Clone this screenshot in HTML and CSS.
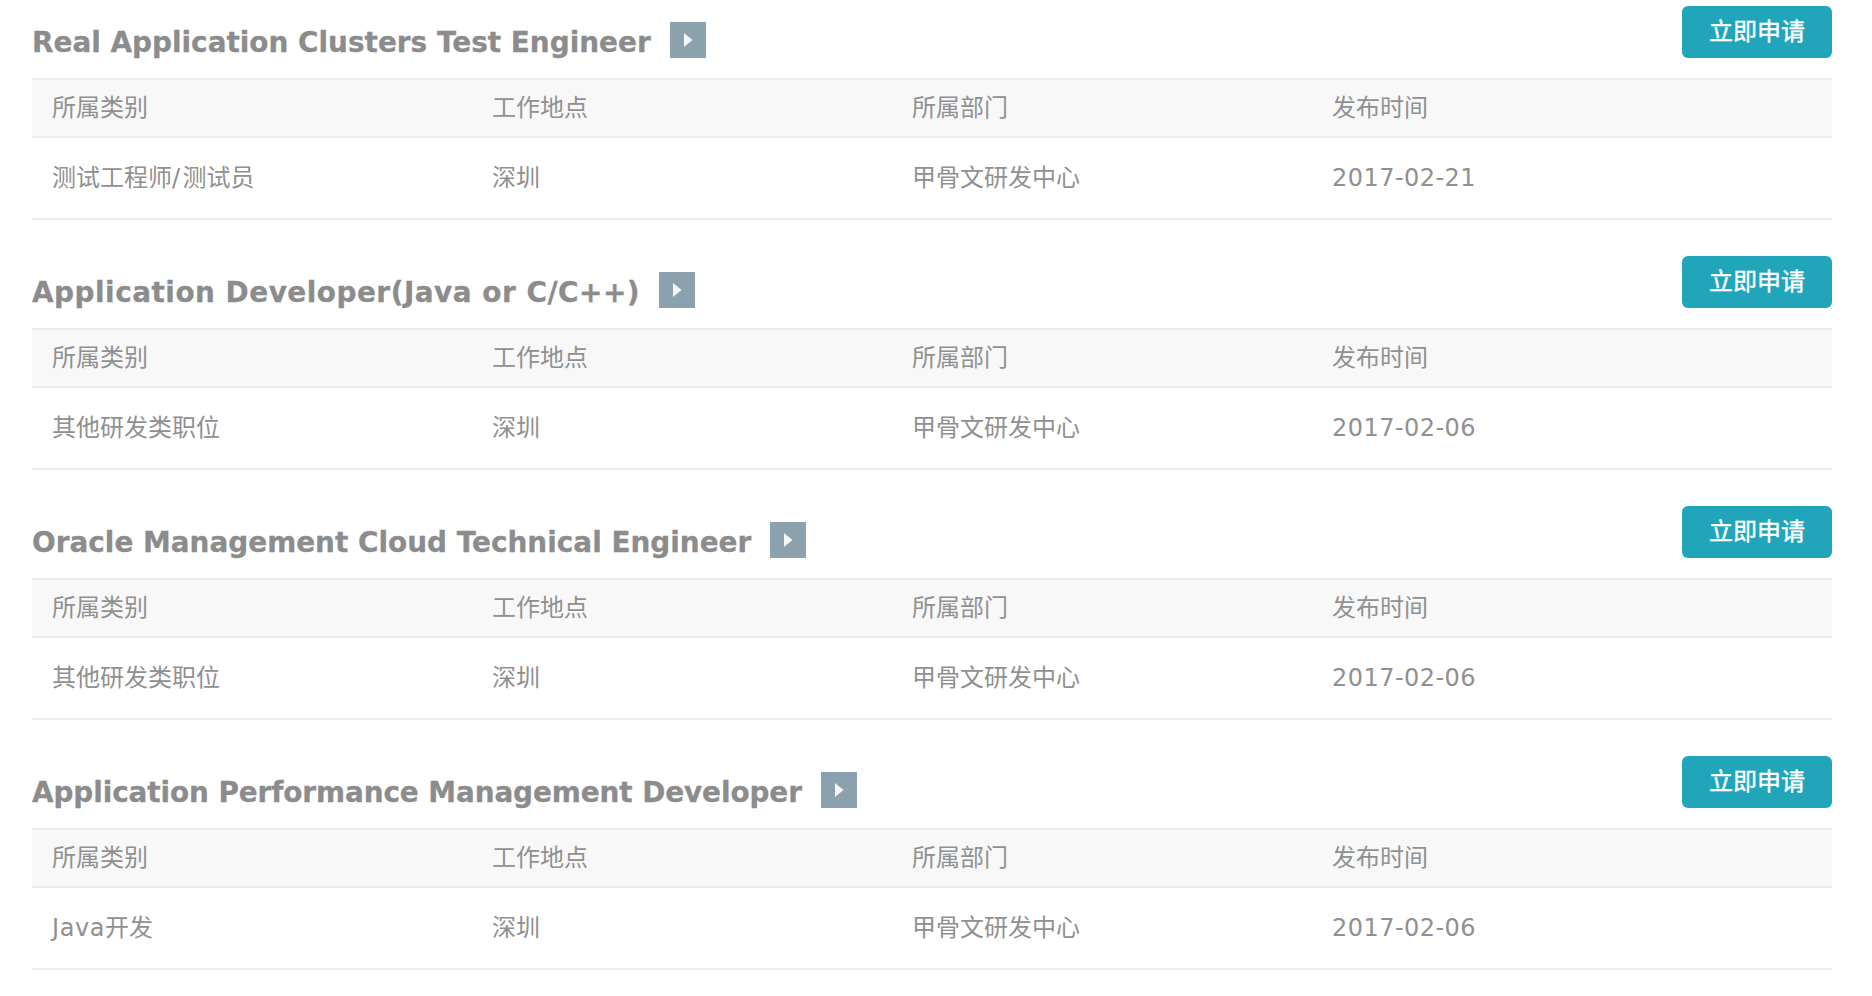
FILE: index.html
```html
<!DOCTYPE html>
<html lang="zh-CN">
<head>
<meta charset="utf-8">
<title>职位列表</title>
<link rel="stylesheet" href="styles.css">
</head>
<body>
<main class="list">
  <section class="job">
    <div class="job-head">
      <h2 class="job-title">Real Application Clusters Test Engineer</h2>
      <span class="arrow"><svg viewBox="0 0 36 36" width="36" height="36"><path d="M14 11l8.500 7-8.500 7z" fill="#f4f7f8"/></svg></span>
      <a class="apply">立即申请</a>
    </div>
    <div class="row row-head"><span>所属类别</span><span>工作地点</span><span>所属部门</span><span>发布时间</span></div>
    <div class="row row-body"><span>测试工程师<i class="slash">/</i>测试员</span><span>深圳</span><span>甲骨文研发中心</span><span class="date">2017-02-21</span></div>
  </section>
  <section class="job">
    <div class="job-head">
      <h2 class="job-title job-title-wide">Application Developer(Java or C/C++)</h2>
      <span class="arrow"><svg viewBox="0 0 36 36" width="36" height="36"><path d="M14 11l8.500 7-8.500 7z" fill="#f4f7f8"/></svg></span>
      <a class="apply">立即申请</a>
    </div>
    <div class="row row-head"><span>所属类别</span><span>工作地点</span><span>所属部门</span><span>发布时间</span></div>
    <div class="row row-body"><span>其他研发类职位</span><span>深圳</span><span>甲骨文研发中心</span><span class="date">2017-02-06</span></div>
  </section>
  <section class="job">
    <div class="job-head">
      <h2 class="job-title">Oracle Management Cloud Technical Engineer</h2>
      <span class="arrow"><svg viewBox="0 0 36 36" width="36" height="36"><path d="M14 11l8.500 7-8.500 7z" fill="#f4f7f8"/></svg></span>
      <a class="apply">立即申请</a>
    </div>
    <div class="row row-head"><span>所属类别</span><span>工作地点</span><span>所属部门</span><span>发布时间</span></div>
    <div class="row row-body"><span>其他研发类职位</span><span>深圳</span><span>甲骨文研发中心</span><span class="date">2017-02-06</span></div>
  </section>
  <section class="job">
    <div class="job-head">
      <h2 class="job-title job-title-tight">Application Performance Management Developer</h2>
      <span class="arrow"><svg viewBox="0 0 36 36" width="36" height="36"><path d="M14 11l8.500 7-8.500 7z" fill="#f4f7f8"/></svg></span>
      <a class="apply">立即申请</a>
    </div>
    <div class="row row-head"><span>所属类别</span><span>工作地点</span><span>所属部门</span><span>发布时间</span></div>
    <div class="row row-body"><span><i class="latin">Java</i>开发</span><span>深圳</span><span>甲骨文研发中心</span><span class="date">2017-02-06</span></div>
  </section>
</main>
</body>
</html>
```
FILE: styles.css
```css
* { box-sizing: border-box; }
html, body { margin: 0; background: #fff; }
body { font-family: "DejaVu Sans", "Noto Sans CJK SC", sans-serif; color: #909090; overflow: hidden; }
.list { padding: 6px 40px 0 32px; }
.job { height: 250px; }
.job-head { display: flex; align-items: flex-start; height: 72px; }
.job-title { margin: 11px 0 0; font: bold 27.9px/52px "DejaVu Sans", sans-serif; color: #8c8c8c; -webkit-text-stroke: 0.3px #8c8c8c; }
.job-title-wide { letter-spacing: 0.5px; }
.job-title-tight { letter-spacing: -0.1px; }
.arrow { flex: none; margin: 16px 0 0 19px; width: 36px; height: 36px; background: #8ba2ae; display: block; }
.arrow svg { display: block; }
.apply { margin-left: auto; width: 150px; height: 52px; border-radius: 6px; background: #21a5bb; color: #fff; font-size: 24px; font-weight: 400; line-height: 52px; text-align: center; -webkit-text-stroke: 0.4px #fff; }
.row { display: grid; grid-template-columns: 440px 420px 420px 1fr; padding-left: 20px; font-size: 24px; }
.row span { display: block; }
.row-head { height: 60px; line-height: 56px; background: #f8f8f8; border-top: 2px solid #ececec; border-bottom: 2px solid #ececec; }
.row-body { height: 82px; line-height: 80px; border-bottom: 2px solid #ececec; }
.latin { font-style: normal; letter-spacing: 0.6px; }
.slash { font-style: normal; letter-spacing: 2.4px; }
.date { letter-spacing: 0.45px; }
```
